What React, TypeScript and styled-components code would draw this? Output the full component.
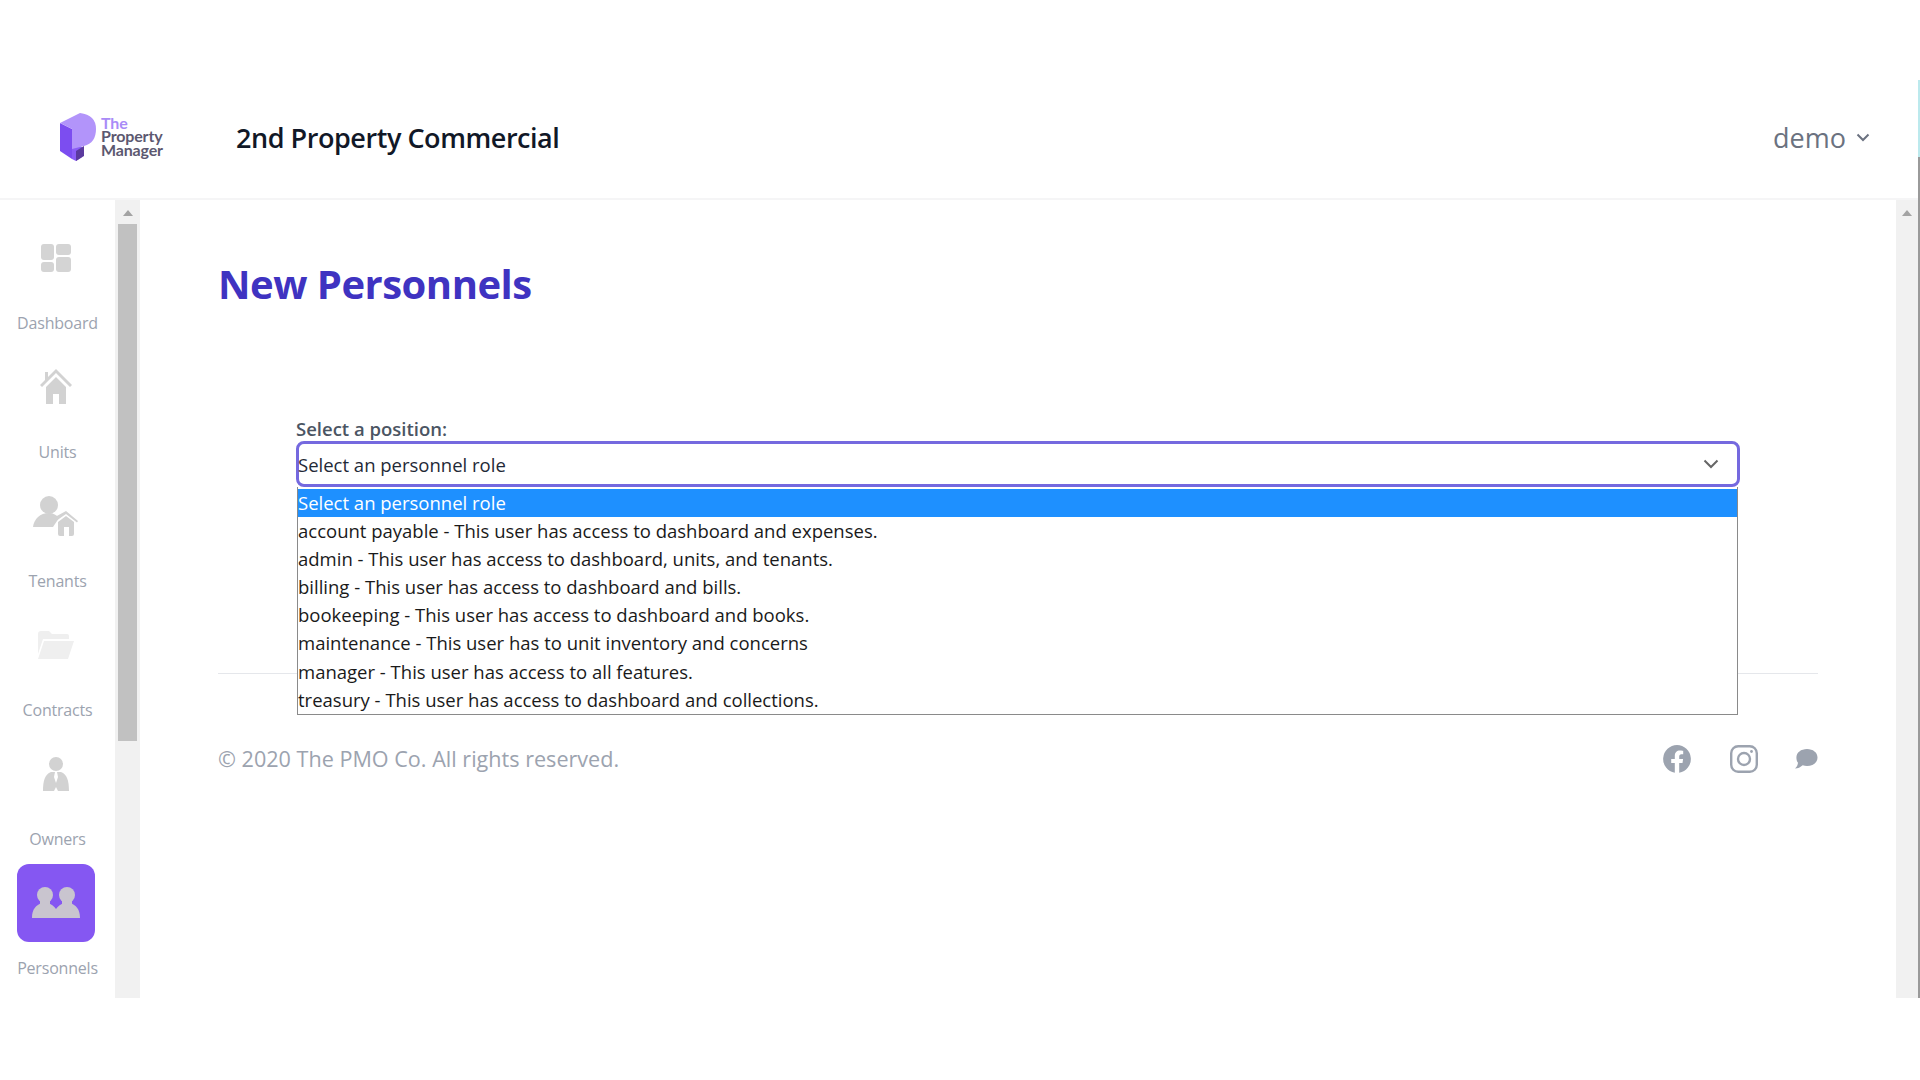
import React from 'react';
import styled, { createGlobalStyle } from 'styled-components';

const GlobalStyle = createGlobalStyle`
  html, body {
    margin: 0;
    padding: 0;
    height: 100%;
    overflow: hidden;
    background: #fff;
  }
  * {
    box-sizing: border-box;
  }
`;

const font = `"Open Sans", "Noto Sans", sans-serif`;

const Page = styled.div`
  position: relative;
  width: 1920px;
  height: 1080px;
  padding-top: 80px;
  padding-right: 2px;
  font-family: ${font};
`;

const EdgeLine = styled.div`
  position: absolute;
  top: 80px;
  right: 0;
  width: 2px;
  height: 918px;
  background: linear-gradient(to bottom, #bce9ed 0, #bce9ed 77px, #9a9a9a 77px, #9a9a9a 100%);
`;

const Header = styled.header`
  height: 120px;
  display: flex;
  align-items: center;
  padding: 0 48px 4px 60px;
  border-bottom: 2px solid #f5f5f6;
`;

const Logo = styled.div`
  display: flex;
  align-items: center;
  gap: 5px;
  width: 176px;
`;

const LogoText = styled.div`
  font-family: "Lato", sans-serif;
  font-size: 16px;
  line-height: 13.5px;
  font-weight: 700;
  color: #5c5870;
  letter-spacing: -0.15px;
  margin-top: -2px;
`;

const LogoThe = styled.span`
  color: #a98bf7;
  display: block;
`;

const CompanyName = styled.h1`
  margin: 0;
  flex: 1;
  font-size: 27px;
  font-weight: 600;
  color: #111827;
  letter-spacing: -0.45px;
`;

const UserMenu = styled.div`
  display: flex;
  align-items: center;
  gap: 10px;
  font-size: 27px;
  color: #6b7280;
`;

const Body = styled.div`
  display: flex;
  height: 798px;
`;

const Sidebar = styled.nav`
  width: 115px;
  display: flex;
  flex-direction: column;
  padding-top: 19px;
`;

const NavItem = styled.div`
  height: 129px;
  display: flex;
  flex-direction: column;
  align-items: center;
`;

const NavIcon = styled.div<{ $active?: boolean }>`
  width: 78px;
  height: 78px;
  margin-left: -3px;
  border-radius: 12px;
  display: flex;
  align-items: center;
  justify-content: center;
  background: ${props => (props.$active ? '#8557f2' : 'transparent')};
`;

const NavLabel = styled.span`
  margin-top: 15px;
  font-size: 16px;
  line-height: 22px;
  color: #9ca3af;
  letter-spacing: -0.2px;
`;

const Scrollbar = styled.div<{ $width: number }>`
  width: ${props => props.$width}px;
  flex-shrink: 0;
  background: #f1f1f1;
  display: flex;
  flex-direction: column;
  align-items: center;
  padding-top: 10px;
`;

const ScrollArrow = styled.div`
  width: 0;
  height: 0;
  border-left: 5px solid transparent;
  border-right: 5px solid transparent;
  border-bottom: 6px solid #a3a3a3;
`;

const ScrollThumb = styled.div`
  width: 19px;
  height: 517px;
  margin-top: 8px;
  background: #c1c1c1;
`;

const Main = styled.main`
  flex: 1;
  padding: 53px 78px 0 78px;
`;

const Title = styled.h2`
  margin: 0;
  font-size: 40px;
  line-height: 62px;
  font-weight: 700;
  color: #3f33c1;
  letter-spacing: -0.5px;
`;

const Form = styled.div`
  margin: 0 78px;
  padding-top: 102px;
  position: relative;
  height: 358px;
`;

const FieldLabel = styled.label`
  display: block;
  font-size: 18.5px;
  line-height: 24px;
  font-weight: 600;
  color: #4b5563;
`;

const SelectBox = styled.div`
  height: 46px;
  border: 3px solid #7569df;
  border-radius: 8px;
  padding: 0 18px 0 0;
  display: flex;
  align-items: center;
  justify-content: space-between;
  font-size: 18.5px;
  color: #1f2937;
  background: #fff;
`;

const SelectValue = styled.span`
  margin-left: -1px;
`;

const OptionList = styled.div`
  position: absolute;
  left: 1px;
  right: 2px;
  top: 172px;
  background: #fff;
  border: 1px solid #8a8a8a;
  border-top: 0;
  padding-top: 2px;
  z-index: 2;
`;

const Option = styled.div<{ $selected?: boolean }>`
  height: 28.1px;
  line-height: 28px;
  font-size: 18.5px;
  color: ${props => (props.$selected ? '#fff' : '#1a1a1a')};
  background: ${props => (props.$selected ? '#1e90ff' : '#fff')};
`;

const Divider = styled.hr`
  margin: 0;
  border: 0;
  border-top: 1px solid #e5e7eb;
`;

const Footer = styled.footer`
  display: flex;
  align-items: center;
  justify-content: space-between;
  padding-top: 70px;
`;

const Copyright = styled.span`
  font-size: 21.6px;
  color: #9ca3af;
`;

const Socials = styled.div`
  display: flex;
  align-items: center;
  gap: 39px;
`;

const ChatIcon = styled.svg`
  margin-left: -3px;
`;

const navItems = [
  {
    label: 'Dashboard',
    icon: (
      <svg width="30" height="28" viewBox="0 0 30 28" fill="#d4d4d4">
        <rect x="0" y="0" width="13" height="16" rx="3" />
        <rect x="15" y="0" width="15" height="11" rx="3" />
        <rect x="0" y="18" width="13" height="10" rx="3" />
        <rect x="15" y="13" width="15" height="15" rx="3" />
      </svg>
    ),
  },
  {
    label: 'Units',
    icon: (
      <svg width="32" height="36" viewBox="0 0 32 36" fill="#d2d2d2">
        <path d="M16 0 L32 16 L30 18 L16 4 L2 18 L0 16 L5 11 V3 H8 V8 Z" />
        <path d="M6 18 L16 8 L26 18 V35 H19 V25 H13 V35 H6 Z" />
      </svg>
    ),
  },
  {
    label: 'Tenants',
    icon: (
      <svg width="46" height="40" viewBox="0 0 46 40" fill="#d2d2d2">
        <circle cx="16" cy="9" r="9" />
        <path d="M0 31 C1 23 7 17 16 17 C20 17 24 19 26 22 L20 31 Z" />
        <path d="M22 21 L33 15 L45 25 L44 26.5 L33 18 L23 25 Z" />
        <path d="M25 26 L33 20 L41 26 V38 Q41 40 39 40 H36 V31 H31 V40 H27 Q25 40 25 38 Z" />
      </svg>
    ),
  },
  {
    label: 'Contracts',
    icon: (
      <svg width="38" height="30" viewBox="0 0 38 30" fill="#efefef">
        <path d="M1 4 Q1 1 4 1 H12 L15 4 H30 Q32 4 32 6 V9 H6 L1 24 Z" />
        <path d="M7 11 H37 L31 29 H1 Z" />
      </svg>
    ),
  },
  {
    label: 'Owners',
    icon: (
      <svg width="28" height="36" viewBox="0 0 28 36" fill="#d2d2d2">
        <circle cx="14" cy="8" r="7" />
        <path d="M9 16 L13 16 L12 21 L14 27 L16 21 L15 16 L19 16 C25 18 27 25 27 35 H16 L14 31 L12 35 H1 C1 25 3 18 9 16 Z" />
      </svg>
    ),
  },
  {
    label: 'Personnels',
    active: true,
    icon: (
      <svg width="50" height="32" viewBox="0 0 50 32" fill="#c9c5cf">
        <circle cx="14" cy="8" r="8" />
        <circle cx="36" cy="8" r="8" />
        <rect x="9" y="12" width="10" height="8" />
        <rect x="31" y="12" width="10" height="8" />
        <path d="M1 31 C1 22 5 18 11 16 L17 16 C20 17 23 19 25 22 C27 19 30 17 33 16 L39 16 C45 18 49 22 49 31 Z" />
      </svg>
    ),
  },
];

const roles = [
  'Select an personnel role',
  'account payable - This user has access to dashboard and expenses.',
  'admin - This user has access to dashboard, units, and tenants.',
  'billing - This user has access to dashboard and bills.',
  'bookeeping - This user has access to dashboard and books.',
  'maintenance - This user has to unit inventory and concerns',
  'manager - This user has access to all features.',
  'treasury - This user has access to dashboard and collections.',
];

const LogoMark = () => (
  <svg width="36" height="48" viewBox="0 0 36 48">
    <path d="M0 10 L12 16 V46 L0 38 Z" fill="#7c4df0" />
    <path d="M12 16 V46 L16 48 L22 44 V34 L12 28 Z" fill="#8b5cf6" />
    <path d="M0 10 L20 0 Q36 2 36 16 Q36 30 24 33 L12 36 V16 Z" fill="#b294fa" />
    <path d="M16 38 L24 33 V43 L16 48 Z" fill="#5b3a9e" />
  </svg>
);

const App: React.FC = () => {
  return (
    <Page>
      <GlobalStyle />
      <EdgeLine />
      <Header>
        <Logo>
          <LogoMark />
          <LogoText>
            <LogoThe>The</LogoThe>
            Property
            <br />
            Manager
          </LogoText>
        </Logo>
        <CompanyName>2nd Property Commercial</CompanyName>
        <UserMenu>
          demo
          <svg width="14" height="9" viewBox="0 0 14 9" fill="none" stroke="#6b7280" strokeWidth="2">
            <path d="M1.5 1.5 L7 7 L12.5 1.5" />
          </svg>
        </UserMenu>
      </Header>
      <Body>
        <Sidebar>
          {navItems.map(item => (
            <NavItem key={item.label}>
              <NavIcon $active={item.active}>{item.icon}</NavIcon>
              <NavLabel>{item.label}</NavLabel>
            </NavItem>
          ))}
        </Sidebar>
        <Scrollbar $width={25}>
          <ScrollArrow />
          <ScrollThumb />
        </Scrollbar>
        <Main>
          <Title>New Personnels</Title>
          <Form>
            <FieldLabel>Select a position:</FieldLabel>
            <SelectBox>
              <SelectValue>{roles[0]}</SelectValue>
              <svg width="16" height="10" viewBox="0 0 16 10" fill="none" stroke="#666" strokeWidth="2">
                <path d="M1.5 1.5 L8 8 L14.5 1.5" />
              </svg>
            </SelectBox>
            <OptionList>
              {roles.map((role, i) => (
                <Option key={role} $selected={i === 0}>
                  {role}
                </Option>
              ))}
            </OptionList>
          </Form>
          <Divider />
          <Footer>
            <Copyright>© 2020 The PMO Co. All rights reserved.</Copyright>
            <Socials>
              <svg width="28" height="28" viewBox="0 0 28 28" fill="#9ca3af">
                <path d="M14 0 A14 14 0 0 1 16.2 27.8 V18 H19.5 L20.1 14 H16.2 V11.4 C16.2 10.3 16.8 9.2 18.4 9.2 H20.2 V5.8 C20.2 5.8 18.6 5.5 17 5.5 C13.8 5.5 11.8 7.4 11.8 11 V14 H8.2 V18 H11.8 V27.8 A14 14 0 0 1 14 0 Z" />
              </svg>
              <svg width="28" height="28" viewBox="0 0 28 28" fill="none" stroke="#9ca3af" strokeWidth="2.4">
                <rect x="1.2" y="1.2" width="25.6" height="25.6" rx="7" />
                <circle cx="14" cy="14" r="6" />
                <circle cx="21.5" cy="6.5" r="1.4" fill="#9ca3af" stroke="none" />
              </svg>
              <ChatIcon width="24" height="22" viewBox="0 0 24 22" fill="#9ca3af">
                <path d="M13 1 C19 1 23.5 4.5 23.5 9.5 C23.5 14.5 19 18 13 18 C11.5 18 10 17.8 8.7 17.3 C6.5 19.3 3.8 20.6 1 20.6 C2.8 19 3.8 17 4 14.8 C2.9 13.4 2.4 11.6 2.4 9.5 C2.4 4.5 7 1 13 1 Z" />
              </ChatIcon>
            </Socials>
          </Footer>
        </Main>
        <Scrollbar $width={22}>
          <ScrollArrow />
        </Scrollbar>
      </Body>
    </Page>
  );
};

export default App;
